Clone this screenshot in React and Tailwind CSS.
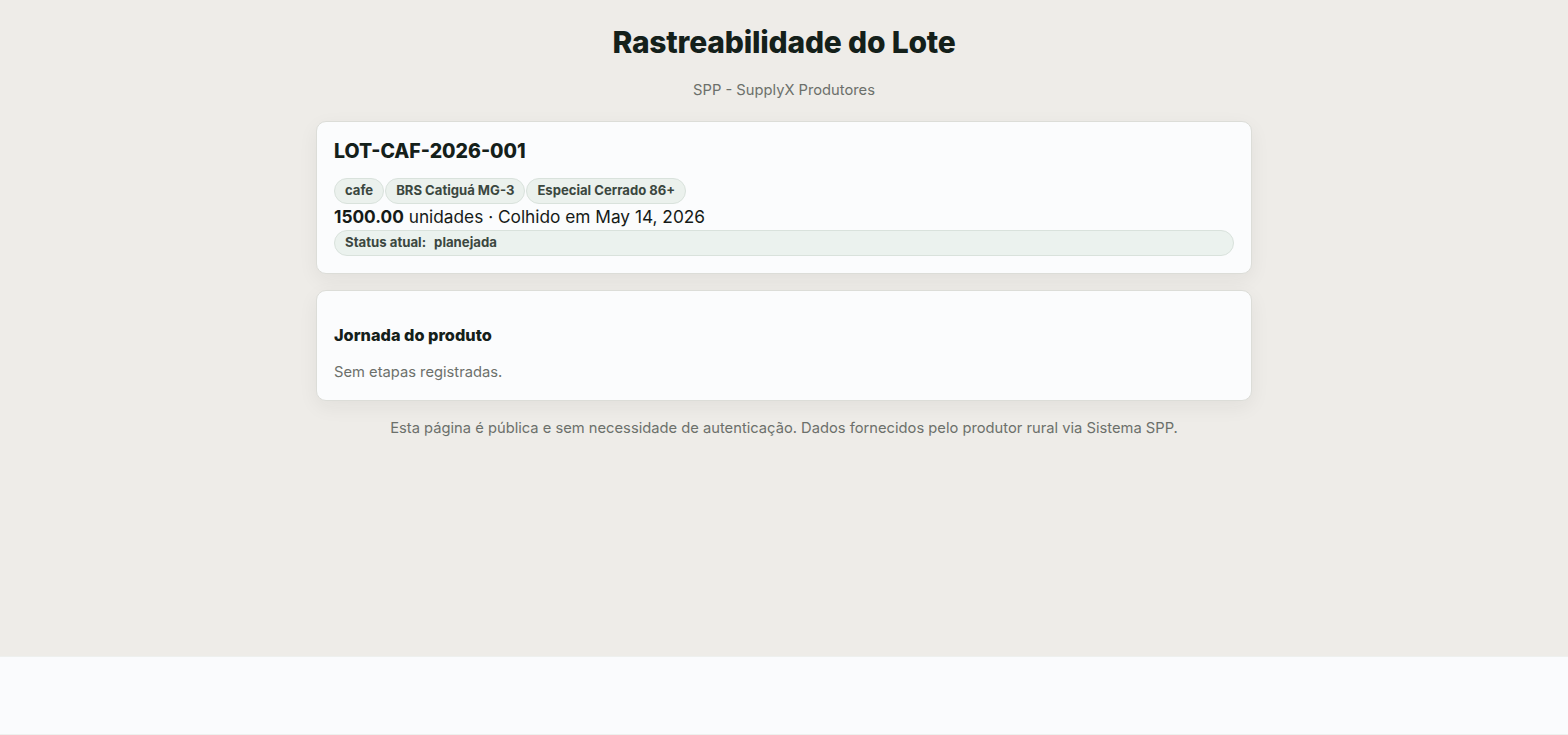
import React from 'react';

const TAGS = ['cafe', 'BRS Catiguá MG-3', 'Especial Cerrado 86+'];

const Tag = ({ children }) => (
  <span className="inline-flex h-[26px] items-center rounded-full border border-[#d9e2dc] bg-[#ebf1ed] px-[10px] text-[13.1px] font-bold text-[#3b473f]">
    {children}
  </span>
);

export default function App() {
  return (
    <div className="font-['Inter',sans-serif]">
      <main className="flex min-h-[656px] flex-col items-center bg-[#eeece8] pt-6">
        <h1 className="text-[30px] font-extrabold leading-[36px] tracking-[-0.2px] text-[#14201a]">
          Rastreabilidade do Lote
        </h1>
        <p className="mt-[19px] text-[14.72px] leading-[22px] text-[#6c706b]">SPP - SupplyX Produtores</p>

        {/* resumo do lote */}
        <section className="mt-[20px] w-[936px] rounded-[10px] border border-[#dcddd8] bg-[#fbfcfd] px-[17px] pt-[17px] pb-[17px] shadow-[0_6px_20px_rgba(40,40,30,0.06)]">
          <h2 className="text-[19.5px] font-extrabold leading-[24px] text-[#14201a]">LOT-CAF-2026-001</h2>
          <div className="mt-[15px] flex gap-px">
            {TAGS.map((t) => (
              <Tag key={t}>{t}</Tag>
            ))}
          </div>
          <p className="mt-[1px] text-[17.28px] leading-[24px] text-[#151a17]">
            <strong className="font-bold">1500.00</strong> unidades · Colhido em May 14, 2026
          </p>
          <div className="mt-px flex h-[26px] items-center gap-[8px] rounded-full border border-[#d9e2dc] bg-[#ebf2ee] px-[10px] text-[13.2px] font-bold text-[#3b473f]">
            <span>Status atual:</span>
            <span>planejada</span>
          </div>
        </section>

        {/* etapas */}
        <section className="mt-[16px] w-[936px] rounded-[10px] border border-[#dcddd8] bg-[#fbfcfd] px-[17px] pt-[32px] pb-[17px] shadow-[0_6px_20px_rgba(40,40,30,0.06)]">
          <h3 className="text-[16.3px] font-extrabold leading-[24px] text-[#14201a]">Jornada do produto</h3>
          <p className="mt-[14px] text-[14.72px] leading-[22px] text-[#6c706b]">Sem etapas registradas.</p>
        </section>

        <p className="mt-[16px] text-[14.72px] leading-[22px] text-[#6c706b]">
          Esta página é pública e sem necessidade de autenticação. Dados fornecidos pelo produtor rural via Sistema SPP.
        </p>
      </main>
      <footer className="h-[79px] border-t border-b border-[#eef0ee] bg-[#fafbfd]" />
    </div>
  );
}
